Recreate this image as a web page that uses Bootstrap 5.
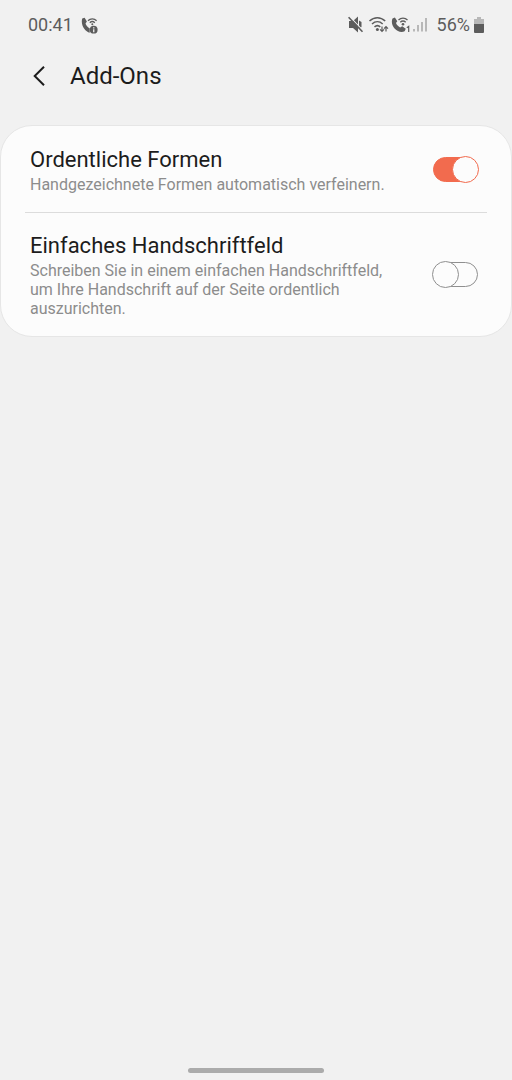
<!DOCTYPE html>
<html lang="de">
<head>
<meta charset="utf-8">
<meta name="viewport" content="width=device-width, initial-scale=1">
<title>Add-Ons</title>
<link href="https://cdn.jsdelivr.net/npm/bootstrap@5.3.0/dist/css/bootstrap.min.css" rel="stylesheet">
<style>
  body { background: #f1f1f1; color: #1c1c1c; font-family: Roboto, "Noto Sans", sans-serif; }
  .status-bar { height: 50px; padding: 0 28px; color: #5c5c5c; font-size: 18px; line-height: 24px; }
  .status-bar svg { display: block; fill: #5c5c5c; }
  .status-bar .line { fill: none; stroke: #5c5c5c; }
  .status-icons { margin-right: 10px; }
  .app-header { height: 52px; padding: 0 27px; gap: 19px; }
  .app-title { font-size: 24px; line-height: 30px; font-weight: 400; }
  .back-button { width: 24px; height: 30px; }
  .settings { margin-top: 23px; background: #fcfcfc; border: 1px solid #e6e6e6; border-radius: 32px; padding: 0 24px; }
  .setting { padding: 19px 8px 18px 5px; }
  .setting + .setting { border-top: 1px solid #dcdcdc; padding-top: 18px; }
  .setting-name { font-size: 22px; line-height: 30px; }
  .setting-text { font-size: 16px; line-height: 19px; color: #8c8c8c; }
  .setting-label { max-width: 364px; }
  .toggle { appearance: none; width: 47px; height: 27px; margin: 0; background: none; display: grid; align-items: center; cursor: pointer; }
  .toggle::before, .toggle::after { content: ""; grid-area: 1 / 1; box-sizing: border-box; border: 1px solid #8f8f8f; background: #fcfcfc; }
  .toggle::before { height: 25px; margin: 0 1px; border-radius: 13px; }
  .toggle::after { width: 27px; height: 27px; border-radius: 50%; }
  .toggle:checked::before { background: #f26b4e; border-color: #f26b4e; }
  .toggle:checked::after { justify-self: end; border-color: #f26b4e; }
  .home-bar { width: 136px; height: 5px; margin-bottom: 7px; background: #ababab; }
</style>
</head>
<body>
<div class="d-flex flex-column min-vh-100">
  <div class="status-bar d-flex align-items-center justify-content-between">
    <div class="d-flex align-items-center gap-2">
      <span>00:41</span>
      <svg width="17" height="17" viewBox="0 0 17 17" aria-hidden="true">
        <path d="M1.2 1.6 3.6.8 5.9 4.6 4.5 6.4c.7 2.2 2.2 3.8 4.2 4.9v4.5C4.1 14.500-.6 8.300 1.2 1.600z"/>
        <path class="line" stroke-width="1.3" d="M7 3.700c2.400-2.500 6.200-2.500 8.600 0M8.800 5.700c1.500-1.400 3.500-1.400 5 0"/>
        <circle cx="11.3" cy="7.3" r="1"/>
        <circle cx="12.7" cy="12.7" r="3.9"/>
        <path d="M12.1 10.300h1.300v1.200h-1.300zM12.1 12.200h1.300v3h-1.300z" fill="#f1f1f1"/>
      </svg>
    </div>
    <div class="d-flex align-items-center">
      <svg class="status-icons" width="79" height="18" viewBox="0 0 79 18" aria-hidden="true">
        <path d="M1 5h4l5-4.500v16L5 12H1z"/>
        <path d="M11 4.500v8l2.500-1.500V6z"/>
        <path class="line" style="stroke:#f1f1f1" stroke-width="1.2" d="M1.200.2 15.400 14.800"/>
        <path class="line" stroke-width="1.600" d="M.6 1.200 14.500 15.700"/>
        <path class="line" stroke-width="1.500" d="M21.500 5c4.700-4.400 11-4.400 15.700 0M24 8c3.300-3 7.500-3 10.700 0M26.500 10.900c1.800-1.600 4-1.600 5.800 0"/>
        <circle cx="29.400" cy="13.400" r="1.500"/>
        <path class="line" stroke-width="1.200" d="M34 10.500v5M32 13.300l2 2 2-2M38 15.500v-5M36 12.700l2-2 2 2"/>
        <path d="M44.500 2.500 46.900 1.600 49.300 5.200 48 7c.8 2 2.200 3.500 4.200 4.400l2-1.200 3.600 2.500-1.200 2.600C49.500 18.300 41.500 9.500 44.500 2.500z"/>
        <path class="line" stroke-width="1.300" d="M50.500 4c2.600-2.500 6.400-2.500 9 0M52.300 6.300c1.600-1.500 3.800-1.500 5.400 0"/>
        <circle cx="55" cy="8.300" r="1.300"/>
        <path class="line" stroke-width="1.200" d="M58.800 11.800 60.700 10.500V16"/>
        <path fill="#b8b8b8" d="M65 13h2v2.500h-2zM69 9h2v6.500h-2zM73 6h2v9.500h-2zM77 2h2v13.500h-2z"/>
      </svg>
      <span>56%</span>
      <svg class="ms-1" width="10" height="16" viewBox="0 0 10 16" aria-hidden="true">
        <path fill="#b8b8b8" d="M3 0h4v2h3v6H0V2h3z"/>
        <path d="M0 7h10v8q0 1-1 1H1q-1 0-1-1z"/>
      </svg>
    </div>
  </div>

  <header class="app-header d-flex align-items-center">
    <button type="button" class="back-button btn border-0 p-0 d-flex align-items-center justify-content-center" aria-label="Zurück">
      <svg width="12" height="20" viewBox="0 0 12 20" fill="none" stroke="#1c1c1c" stroke-width="2" aria-hidden="true"><path d="M11 .8 1.700 10 11 19.200"/></svg>
    </button>
    <h1 class="app-title m-0">Add-Ons</h1>
  </header>

  <main class="settings">
    <div class="setting d-flex align-items-center justify-content-between">
      <label class="setting-label" for="shapes">
        <span class="setting-name d-block">Ordentliche Formen</span>
        <span class="setting-text d-block">Handgezeichnete Formen automatisch verfeinern.</span>
      </label>
      <input class="toggle flex-shrink-0" type="checkbox" role="switch" id="shapes" checked>
    </div>
    <div class="setting d-flex align-items-center justify-content-between">
      <label class="setting-label" for="handwriting">
        <span class="setting-name d-block">Einfaches Handschriftfeld</span>
        <span class="setting-text d-block">Schreiben Sie in einem einfachen Handschriftfeld, um Ihre Handschrift auf der Seite ordentlich auszurichten.</span>
      </label>
      <input class="toggle flex-shrink-0" type="checkbox" role="switch" id="handwriting">
    </div>
  </main>

  <div class="home-bar rounded-pill mx-auto mt-auto"></div>
</div>
<script src="https://cdn.jsdelivr.net/npm/bootstrap@5.3.0/dist/js/bootstrap.bundle.min.js"></script>
</body>
</html>
